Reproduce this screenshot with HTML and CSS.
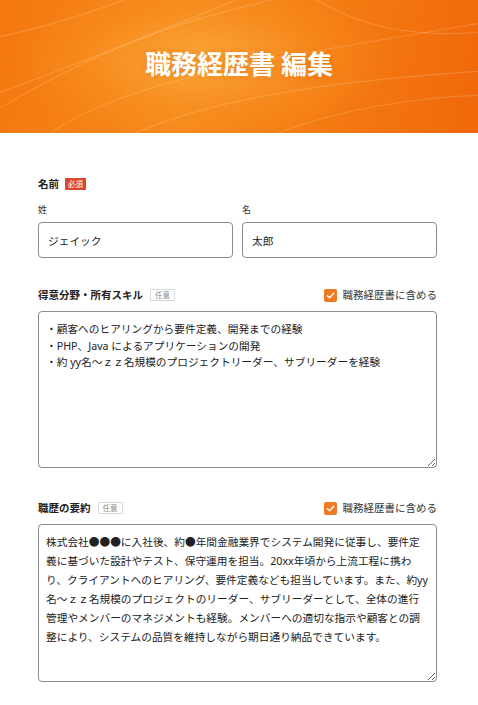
FILE: index.html
```html
<!DOCTYPE html>
<html lang="ja">
<head>
<meta charset="utf-8">
<title>職務経歴書 編集</title>
<link rel="stylesheet" href="styles.css">
</head>
<body>
<header class="hero">
  <svg class="hero-waves" viewBox="0 0 478 133" preserveAspectRatio="none" aria-hidden="true">
    <path d="M-20 120 C 80 60, 160 20, 320 -10" />
    <path d="M-20 100 C 60 70, 140 40, 260 -10" />
    <path d="M40 140 C 120 80, 260 60, 500 20" />
    <path d="M120 140 C 200 100, 330 80, 500 70" />
    <path d="M260 140 C 330 110, 420 95, 500 95" />
    <path d="M300 -10 C 360 30, 420 40, 500 30" />
    <path d="M-20 40 C 40 30, 100 10, 150 -10" />
  </svg>
  <h1 class="hero-title">職務経歴書 編集</h1>
</header>

<main class="form">
  <section class="field field-name">
    <div class="field-head">
      <span class="field-title">名前</span>
      <span class="badge badge-req">必須</span>
    </div>
    <div class="name-grid">
      <label class="sub">
        <span class="sub-label">姓</span>
        <input class="text-input" type="text" value="ジェイック">
      </label>
      <label class="sub">
        <span class="sub-label">名</span>
        <input class="text-input" type="text" value="太郎">
      </label>
    </div>
  </section>

  <section class="field field-skill">
    <div class="field-head spread">
      <div class="title-wrap">
        <span class="field-title">得意分野・所有スキル</span>
        <span class="badge badge-opt">任意</span>
      </div>
      <label class="include">
        <span class="check"><svg viewBox="0 0 14 14" aria-hidden="true"><path d="M3.6 7.2 L6 9.5 L10.6 4.6" /></svg></span>
        <span class="include-text">職務経歴書に含める</span>
      </label>
    </div>
    <textarea class="area area-skill">・顧客へのヒアリングから要件定義、開発までの経験
・PHP、Java によるアプリケーションの開発
・約 yy名〜ｚｚ名規模のプロジェクトリーダー、サブリーダーを経験</textarea>
  </section>

  <section class="field field-summary">
    <div class="field-head spread">
      <div class="title-wrap">
        <span class="field-title">職歴の要約</span>
        <span class="badge badge-opt">任意</span>
      </div>
      <label class="include">
        <span class="check"><svg viewBox="0 0 14 14" aria-hidden="true"><path d="M3.6 7.2 L6 9.5 L10.6 4.6" /></svg></span>
        <span class="include-text">職務経歴書に含める</span>
      </label>
    </div>
    <textarea class="area area-summary">株式会社●●●に入社後、約●年間金融業界でシステム開発に従事し、要件定義に基づいた設計やテスト、保守運用を担当。20xx年頃から上流工程に携わり、クライアントへのヒアリング、要件定義なども担当しています。また、約yy名〜ｚｚ名規模のプロジェクトのリーダー、サブリーダーとして、全体の進行管理やメンバーのマネジメントも経験。メンバーへの適切な指示や顧客との調整により、システムの品質を維持しながら期日通り納品できています。</textarea>
  </section>
</main>
</body>
</html>
```

FILE: styles.css
```css
* { box-sizing: border-box; }

html, body {
  margin: 0;
  padding: 0;
  background: #ffffff;
}

body {
  font-family: "Noto Sans", "Noto Sans CJK JP", sans-serif;
  color: #222222;
  width: 478px;
  overflow: hidden;
}

.hero {
  position: relative;
  height: 133px;
  display: flex;
  align-items: center;
  justify-content: center;
  overflow: hidden;
  background:
    radial-gradient(ellipse 50% 75% at 42% 45%, rgba(252, 172, 60, 0.8) 0%, rgba(250, 150, 40, 0.35) 50%, rgba(248, 130, 20, 0) 80%),
    linear-gradient(100deg, #f4780f 0%, #f68a1c 40%, #f47a12 70%, #f0680a 100%);
}

.hero-waves {
  position: absolute;
  inset: 0;
  width: 100%;
  height: 100%;
}

.hero-waves path {
  fill: none;
  stroke: rgba(255, 235, 200, 0.2);
  stroke-width: 1.2;
}

.hero-title {
  position: relative;
  margin: 0;
  margin-top: -8px;
  font-family: "Noto Sans CJK JP", sans-serif;
  font-size: 26px;
  font-weight: 700;
  color: #ffffff;
  letter-spacing: 0;
  text-shadow: 0 0 6px rgba(200, 80, 0, 0.35);
}

.form {
  display: flex;
  flex-direction: column;
  padding: 43px 41px 40px 38px;
}

.field-skill { margin-top: 28px; }
.field-summary { margin-top: 31px; }

.field-head {
  display: flex;
  align-items: center;
  gap: 6px;
  height: 16px;
}

.field-head.spread {
  justify-content: space-between;
  height: 18px;
}

.title-wrap {
  display: flex;
  align-items: center;
  gap: 7px;
}

.field-title {
  font-family: "Noto Sans CJK JP", sans-serif;
  font-size: 10.5px;
  font-weight: 700;
  color: #222222;
  line-height: 16px;
}

.badge {
  display: inline-flex;
  align-items: center;
  justify-content: center;
  font-family: "Noto Sans CJK JP", sans-serif;
  font-size: 7.5px;
  line-height: 1;
  height: 12px;
  padding: 0 2px;
  border-radius: 1px;
}

.badge-req {
  background: #d9472b;
  color: #ffffff;
  width: 21px;
}

.badge-opt {
  background: #ffffff;
  color: #8a8a8a;
  border: 1px solid #d8d8d8;
  width: 25px;
}

.name-grid {
  display: grid;
  grid-template-columns: 1fr 1fr;
  gap: 9px;
  margin-top: 11px;
}

.sub {
  display: flex;
  flex-direction: column;
}

.sub-label {
  font-family: "Noto Sans CJK JP", sans-serif;
  font-size: 9px;
  line-height: 13px;
  color: #333333;
  margin-bottom: 6px;
}

.text-input {
  height: 36px;
  width: 100%;
  border: 1px solid #8c8c8c;
  border-radius: 4px;
  padding: 0 9px;
  font-family: "Noto Sans", "Noto Sans CJK JP", sans-serif;
  font-size: 10.7px;
  color: #222222;
  background: #ffffff;
  outline: none;
}

.include {
  display: flex;
  align-items: center;
  gap: 6px;
}

.check {
  display: inline-flex;
  width: 13px;
  height: 13px;
  border-radius: 2px;
  background: #ee7a24;
}

.check svg {
  width: 13px;
  height: 13px;
}

.check path {
  fill: none;
  stroke: #ffffff;
  stroke-width: 1.5;
  stroke-linecap: round;
  stroke-linejoin: round;
}

.include-text {
  font-family: "Noto Sans CJK JP", sans-serif;
  font-size: 10.5px;
  color: #333333;
  line-height: 16px;
}

.area {
  display: block;
  width: 100%;
  margin-top: 7px;
  border: 1px solid #8c8c8c;
  border-radius: 4px;
  padding: 8px 7px;
  font-family: "Noto Sans", "Noto Sans CJK JP", sans-serif;
  font-size: 10.7px;
  color: #222222;
  background: #ffffff;
  resize: both;
  outline: none;
}

.area-skill {
  height: 157px;
  padding-top: 9px;
  line-height: 16.5px;
}

.area-summary {
  height: 158px;
  line-height: 19px;
}
```
